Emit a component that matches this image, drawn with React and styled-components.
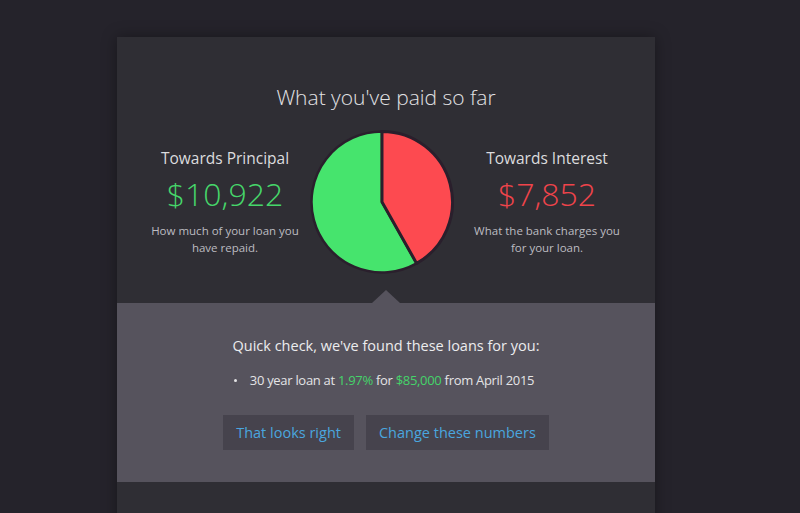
import React from "react"
import styled, { createGlobalStyle } from "styled-components"

const GlobalStyle = createGlobalStyle`
  html, body {
    margin: 0;
    padding: 0;
    background: #25232b;
    font-family: "Open Sans", "Liberation Sans", sans-serif;
    overflow: hidden;
  }
`

const principal = 10922
const interest = 7852

const Pie = ({ a, b, size = 144 }) => {
  const r = size / 2 - 1.5
  const c = size / 2
  const angle = (b / (a + b)) * Math.PI * 2
  const x = c + r * Math.sin(angle)
  const y = c - r * Math.cos(angle)
  const large = angle > Math.PI ? 1 : 0
  const red = `M${c},${c} L${c},${c - r} A${r},${r} 0 ${large} 1 ${x},${y} Z`
  const green = `M${c},${c} L${x},${y} A${r},${r} 0 ${1 - large} 1 ${c},${c - r} Z`
  return (
    <PieBox>
      <svg width={size} height={size} viewBox={`0 0 ${size} ${size}`}>
        <path d={green} fill="#46e46d" stroke="#2a1f2c" strokeWidth="2.5" strokeLinejoin="round" />
        <path d={red} fill="#fd4a50" stroke="#2a1f2c" strokeWidth="3" strokeLinejoin="round" />
      </svg>
    </PieBox>
  )
}

const App = () => {
  return (
    <>
      <GlobalStyle />
      <Card>
        <Summary>
          <Title>What you've paid so far</Title>
          <Columns>
            <Stat>
              <StatLabel>Towards Principal</StatLabel>
              <Amount color="#46d66a">$10,922</Amount>
              <Note>
                How much of your loan you
                <br />
                have repaid.
              </Note>
            </Stat>
            <Pie a={principal} b={interest} />
            <Stat>
              <StatLabel>Towards Interest</StatLabel>
              <Amount color="#f0444b">$7,852</Amount>
              <Note>
                What the bank charges you
                <br />
                for your loan.
              </Note>
            </Stat>
          </Columns>
        </Summary>
        <Check>
          <CheckTitle>Quick check, we've found these loans for you:</CheckTitle>
          <LoanList>
            <Loan>
              30 year loan at <Hi>1.97%</Hi> for <Hi>$85,000</Hi> from April 2015
            </Loan>
          </LoanList>
          <Buttons>
            <Button>That looks right</Button>
            <Button>Change these numbers</Button>
          </Buttons>
        </Check>
        <Footer />
      </Card>
    </>
  )
}

export default App

const Card = styled.div`
  width: 538px;
  margin: 37px 0 0 117px;
  background: #2f2e34;
  box-shadow: 0 0 14px rgba(0, 0, 0, 0.35);
`

const Summary = styled.div`
  position: relative;
  padding: 47px 20px 29px;
  display: flex;
  flex-direction: column;
  align-items: center;

  &::after {
    content: "";
    position: absolute;
    left: 50%;
    bottom: 0;
    margin-left: -14px;
    border-left: 14px solid transparent;
    border-right: 14px solid transparent;
    border-bottom: 13px solid #56535d;
  }
`

const Title = styled.h1`
  margin: 0;
  font-size: 21px;
  line-height: 26px;
  font-weight: 300;
  color: #e2e2e4;
`

const Columns = styled.div`
  margin-top: 20px;
  width: 100%;
  display: grid;
  grid-template-columns: 176px 144px 176px;
  justify-content: space-between;
`

const PieBox = styled.div`
  margin-left: -4px;

  svg {
    display: block;
  }
`

const Stat = styled.div`
  padding-top: 18px;
  display: flex;
  flex-direction: column;
  align-items: center;
  text-align: center;
  white-space: nowrap;
`

const StatLabel = styled.div`
  font-size: 15.5px;
  line-height: 20px;
  font-weight: 400;
  color: #dcdcde;
`

const Amount = styled.div`
  margin-top: 6px;
  font-size: 32px;
  line-height: 40px;
  font-weight: 300;
  color: ${(p) => p.color};
`

const Note = styled.div`
  margin-top: 8px;
  font-size: 11.5px;
  line-height: 17px;
  color: #bdbcc1;
`

const Check = styled.div`
  background: #56535d;
  padding: 33px 20px 32px;
  display: flex;
  flex-direction: column;
  align-items: center;
`

const CheckTitle = styled.div`
  font-size: 14.5px;
  line-height: 20px;
  color: #ececee;
`

const LoanList = styled.ul`
  margin: 15px 0 0;
  padding: 0;
  list-style: none;
`

const Loan = styled.li`
  position: relative;
  padding-left: 16px;
  margin-left: -4px;
  font-size: 13px;
  line-height: 18px;
  letter-spacing: -0.3px;
  color: #e4e4e6;

  &::before {
    content: "";
    position: absolute;
    left: 0;
    top: 8px;
    width: 3px;
    height: 3px;
    border-radius: 50%;
    background: #e4e4e6;
  }
`

const Hi = styled.span`
  color: #45d36a;
`

const Buttons = styled.div`
  margin-top: 26px;
  display: flex;
  gap: 12px;
`

const Button = styled.button`
  height: 35px;
  padding: 0 13px;
  border: none;
  background: #46434d;
  color: #4aa6df;
  font-family: inherit;
  font-size: 14.5px;
  cursor: pointer;
`

const Footer = styled.div`
  height: 60px;
`
